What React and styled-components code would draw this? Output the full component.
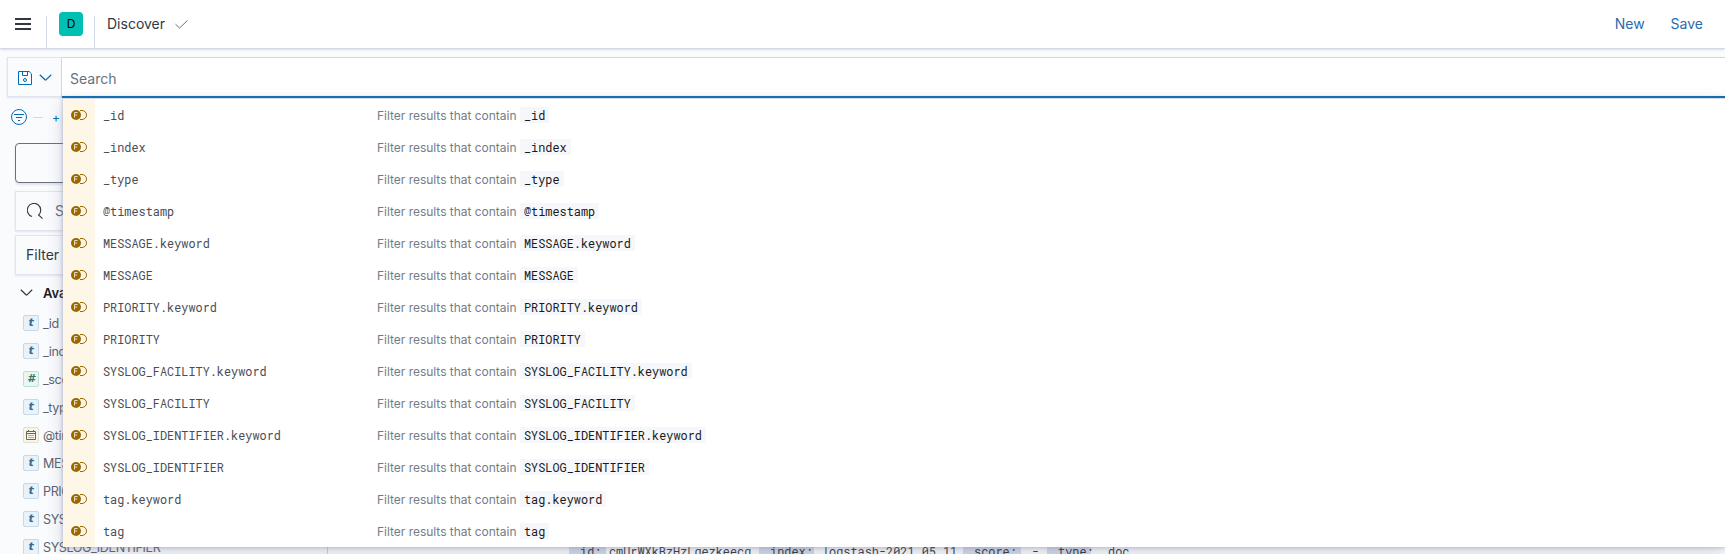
import React from "react";
import styled, { createGlobalStyle, css } from "styled-components";

const GlobalStyle = createGlobalStyle`
  *, *::before, *::after { box-sizing: border-box; }
  body {
    margin: 0;
    background: #fafbfd;
    color: #343741;
    font-family: Inter, "Liberation Sans", sans-serif;
    font-size: 14px;
    overflow: hidden;
  }
`;

const mono = css`
  font-family: "Roboto Mono", "DejaVu Sans Mono", "Liberation Mono", monospace;
  font-size: 11.87px;
`;

const Page = styled.div`
  height: 554px;
  overflow: hidden;
  display: flex;
  flex-direction: column;
`;

const Header = styled.header`
  flex: none;
  height: 49px;
  display: flex;
  align-items: center;
  background: #fff;
  border-bottom: 1px solid #d3dae6;
  box-shadow: 0 2px 2px -1px rgba(152, 162, 179, 0.35);
`;

const MenuButton = styled.div`
  width: 46px;
  height: 48px;
  padding: 18px 0 0 15px;
`;

const MenuBar = styled.div`
  width: 16px;
  height: 2px;
  margin-bottom: 3px;
  background: #343741;
`;

const Divider = styled.div`
  align-self: flex-end;
  width: 1px;
  height: 32px;
  background: #d3dae6;
`;

const Avatar = styled.div`
  width: 24px;
  height: 24px;
  margin: 0 11px 0 12px;
  border-radius: 4px;
  background: #00bfb3;
  color: #000;
  font-size: 12px;
  line-height: 24px;
  text-align: center;
`;

const Title = styled.div`
  margin-left: 12px;
  width: 68px;
  line-height: 20px;
`;

const HeaderLinks = styled.nav`
  margin-left: auto;
  padding-right: 22px;
  display: flex;
  gap: 26px;
  line-height: 20px;
  color: #2a6cb0;
`;

const QueryBar = styled.div`
  flex: none;
  display: flex;
  height: 42px;
  margin: 8px 0 0 7px;
`;

const SavedQueryButton = styled.div`
  width: 54px;
  height: 40px;
  padding: 2px 0 0 10px;
  display: flex;
  align-items: center;
  gap: 7px;
  border: 1px solid #e0e4ee;
  border-right: 0;
  box-shadow: 0 1px 2px rgba(152, 162, 179, 0.25);
`;

const SearchInput = styled.div`
  position: relative;
  flex: 1;
  height: 41px;
  padding-left: 8px;
  line-height: 42px;
  color: #69707d;
  background: #fff;
  border: solid #d0d6e4;
  border-width: 1px 0 0 1px;
  box-shadow: inset 0 -2px #006bb4;
`;

const Suggestions = styled.div`
  position: absolute;
  z-index: 2;
  top: 40px;
  left: 1px;
  right: 0;
  background: #fff;
  border-top: 1px solid #d3dae6;
  box-shadow: 0 0 3px 1px rgba(120, 130, 160, 0.35),
    0 5px 15px rgba(100, 110, 140, 0.28);
`;

const Suggestion = styled.div`
  display: flex;
  align-items: center;
  height: 32px;
  line-height: 30px;
`;

const TypeCell = styled.div`
  width: 32px;
  height: 32px;
  display: flex;
  align-items: center;
  justify-content: center;
  background: #fef6e6;
`;

const FieldText = styled.div`
  ${mono}
  width: 274px;
  margin-left: 8px;
  padding-top: 2px;
  color: #4a4d57;
`;

const Description = styled.div`
  display: flex;
  align-items: center;
  font-size: 12px;
  letter-spacing: -0.02px;
  color: #757b88;
  white-space: nowrap;
`;

const Phrase = styled.span`
  width: 143px;
  padding-top: 2px;
`;

const Code = styled.code`
  ${mono}
  height: 16px;
  line-height: 18px;
  padding: 0 4px;
  letter-spacing: 0;
  color: #1a1a1c;
  background: #f5f7fa;
`;

const FilterBar = styled.div`
  flex: none;
  height: 36px;
  padding-left: 11px;
  display: flex;
  align-items: center;
  color: #006bb4;
  font-size: 12px;
`;

const Dash = styled.div`
  width: 10px;
  height: 1px;
  margin: 0 9px 0 6px;
  background: #d3dae6;
`;

const Content = styled.main`
  flex: 1;
  display: flex;
  min-height: 0;
`;

const Sidebar = styled.aside`
  width: 328px;
  padding: 8px 8px 0 15px;
  border-right: 1px solid #cbd2df;
`;

const IndexButton = styled.div`
  height: 40px;
  border: 1px solid #69707d;
  border-radius: 4px;
  box-shadow: 0 2px 2px rgba(152, 162, 179, 0.25);
`;

const Control = styled.div`
  height: 40px;
  margin-top: ${(p) => p.$gap}px;
  padding: 0 0 1px ${(p) => p.$indent}px;
  display: flex;
  align-items: center;
  gap: 12px;
  line-height: 20px;
  color: ${(p) => (p.$muted ? "#69707d" : "#343741")};
  border: 1px solid #e0e4ee;
  box-shadow: 0 1px 2px rgba(152, 162, 179, 0.25);
`;

const SectionTitle = styled.div`
  height: 34px;
  padding: 2px 0 0 5px;
  display: flex;
  align-items: center;
  gap: 10px;
  font-size: 13px;
  font-weight: 600;
  color: #1a1c21;
`;

const FieldRow = styled.div`
  height: 28px;
  padding-left: 8px;
  display: flex;
  align-items: center;
  gap: 4px;
  font-size: 12.6px;
  letter-spacing: -0.4px;
  color: #5d6370;
`;

const tokenTones = {
  t: ["#eaf2f9", "#c5d9eb", "#386b94"],
  "#": ["#e9f6f2", "#b9e2d5", "#387765"],
  date: ["#f7f5ee", "#e4dfcc", "#6f6849"],
};

const Token = styled.span`
  width: 16px;
  height: 16px;
  display: flex;
  align-items: center;
  justify-content: center;
  background: ${(p) => tokenTones[p.$kind][0]};
  border: 1px solid ${(p) => tokenTones[p.$kind][1]};
  border-radius: 2px;
  color: ${(p) => tokenTones[p.$kind][2]};
  font: italic 700 11px/14px "DejaVu Sans", sans-serif;
`;

const DocLine = styled.div`
  ${mono}
  display: flex;
  height: 18px;
  margin: 408px 0 0 241px;
  line-height: 18px;
  white-space: pre;
  color: #343741;
`;

const DocKey = styled.span`
  width: ${(p) => p.$width}px;
  padding-left: 4px;
  background: #d3dbe8;
`;

const DocValue = styled.span`
  width: ${(p) => p.$width}px;
  padding-left: ${(p) => p.$indent}px;
`;

const Check = () => (
  <svg width="13" height="9" viewBox="0 0 13 9" fill="none" stroke="#69707d">
    <path d="M.5 4.2 4.6 8 12.4.5" />
  </svg>
);

const Chevron = ({ color }) => (
  <svg width="13" height="8" viewBox="0 0 13 8" fill="none" stroke={color} strokeWidth="1.2">
    <path d="M.8.8 6 5.8q.5.5 1 0L12.2.8" />
  </svg>
);

const SaveIcon = () => (
  <svg width="14" height="14" viewBox="0 0 14 14" fill="none" stroke="#006bb4">
    <path d="M.5.5H11.2L13.5 2.8V13.5H.5ZM4.5.5V4.5H9.5V.5" />
    <circle cx="7" cy="9" r="1.5" />
  </svg>
);

const FilterIcon = () => (
  <svg width="16" height="16" viewBox="0 0 16 16" fill="none" stroke="#006bb4">
    <circle cx="8" cy="8" r="7.5" />
    <path d="M3 5.5h10M5 8.5h6M7 11.5h2" />
  </svg>
);

const SearchIcon = () => (
  <svg width="16" height="16" viewBox="0 0 16 16" fill="none" stroke="#343741" strokeWidth="1.1">
    <path d="M5 13.5A6.700 6.700 0 1 1 11.600 12L15.500 15.600" />
  </svg>
);

const CalendarIcon = () => (
  <svg width="12" height="12" viewBox="0 0 12 12" fill="none" stroke="#6f6849">
    <path d="M1.5 2.5h9v8h-9ZM1.5 4.5h9M3.5 1v2M8.5 1v2" />
    <path d="M3.5 6.5h5M3.5 8.5h5" strokeDasharray="1 1" />
  </svg>
);

const KqlFieldIcon = () => (
  <svg width="16" height="16" viewBox="0 0 16 16" fill="none">
    <path d="M9 3.500h2A4.500 4.500 0 0 1 11 12.500H9" stroke="#996900" />
    <circle cx="5" cy="8" r="5" fill="#996900" />
    <path d="M3.5 10.500V5.500h3.200M3.500 8h2.700" stroke="#fef6e6" strokeWidth=".8" />
  </svg>
);

const suggestions = [
  "_id",
  "_index",
  "_type",
  "@timestamp",
  "MESSAGE.keyword",
  "MESSAGE",
  "PRIORITY.keyword",
  "PRIORITY",
  "SYSLOG_FACILITY.keyword",
  "SYSLOG_FACILITY",
  "SYSLOG_IDENTIFIER.keyword",
  "SYSLOG_IDENTIFIER",
  "tag.keyword",
  "tag",
];

const fields = [
  ["t", "_id"],
  ["t", "_index"],
  ["#", "_score"],
  ["t", "_type"],
  ["date", "@timestamp"],
  ["t", "MESSAGE"],
  ["t", "PRIORITY"],
  ["t", "SYSLOG_FACILITY"],
  ["t", "SYSLOG_IDENTIFIER"],
];

export default function App() {
  return (
    <Page>
      <GlobalStyle />
      <Header>
        <MenuButton>
          <MenuBar />
          <MenuBar />
          <MenuBar />
        </MenuButton>
        <Divider />
        <Avatar>D</Avatar>
        <Divider />
        <Title>Discover</Title>
        <Check />
        <HeaderLinks>
          <span>New</span>
          <span>Save</span>
        </HeaderLinks>
      </Header>
      <QueryBar>
        <SavedQueryButton>
          <SaveIcon />
          <Chevron color="#006bb4" />
        </SavedQueryButton>
        <SearchInput>
          Search
          <Suggestions>
            {suggestions.map((name) => (
              <Suggestion key={name}>
                <TypeCell>
                  <KqlFieldIcon />
                </TypeCell>
                <FieldText>{name}</FieldText>
                <Description>
                  <Phrase>Filter results that contain</Phrase>
                  <Code>{name}</Code>
                </Description>
              </Suggestion>
            ))}
          </Suggestions>
        </SearchInput>
      </QueryBar>
      <FilterBar>
        <FilterIcon />
        <Dash />
        <span>+</span>
      </FilterBar>
      <Content>
        <Sidebar>
          <IndexButton />
          <Control $gap={8} $indent={11} $muted>
            <SearchIcon />
            Search field names
          </Control>
          <Control $gap={4} $indent={10}>
            Filter by type
          </Control>
          <SectionTitle>
            <Chevron color="#343741" />
            Available fields
          </SectionTitle>
          {fields.map(([kind, name]) => (
            <FieldRow key={name}>
              <Token $kind={kind}>{kind === "date" ? <CalendarIcon /> : kind}</Token>
              {name}
            </FieldRow>
          ))}
        </Sidebar>
        <DocLine>
          <DocKey $width={37}>_id:</DocKey>
          <DocValue $width={153} $indent={3}>cmUrWXkBzHzLqezkeecq</DocValue>
          <DocKey $width={55}>_index:</DocKey>
          <DocValue $width={149} $indent={8}>logstash-2021.05.11</DocValue>
          <DocKey $width={58}>_score:</DocKey>
          <DocValue $width={26} $indent={11}>-</DocValue>
          <DocKey $width={44}>_type:</DocKey>
          <DocValue $width={60} $indent={10}>_doc</DocValue>
        </DocLine>
      </Content>
    </Page>
  );
}
